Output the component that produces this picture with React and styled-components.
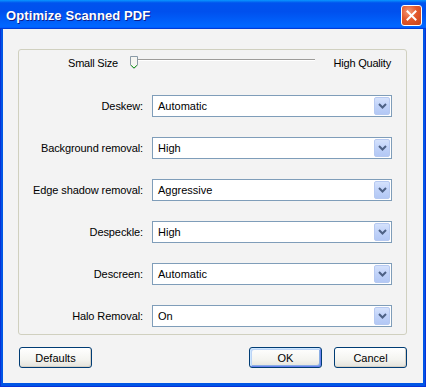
import React from "react";
import styled, { createGlobalStyle } from "styled-components";

const GlobalStyle = createGlobalStyle`
  html, body {
    margin: 0;
    padding: 0;
    background: #ffffff;
  }
  body {
    font-family: "Liberation Sans", Arial, sans-serif;
    font-size: 11px;
  }
`;

const Window = styled.div`
  width: 426px;
  height: 387px;
  box-sizing: border-box;
  display: flex;
  flex-direction: column;
  background: #0055e5;
  border-left: 1px solid #0831d9;
  border-right: 1px solid #0831d9;
  border-bottom: 1px solid #0831d9;
`;

const TitleBar = styled.div`
  height: 29px;
  flex-shrink: 0;
  display: flex;
  align-items: center;
  justify-content: space-between;
  padding: 0 4px 0 6px;
  margin: 0 -1px;
  background: linear-gradient(
    to bottom,
    #0997ff 0%,
    #0053ee 10%,
    #0050ee 40%,
    #0066ff 88%,
    #0066ff 93%,
    #005bff 95%,
    #003dd7 97%,
    #003dd7 100%
  );
`;

const Title = styled.span`
  color: #ffffff;
  font-family: "Liberation Sans", Arial, sans-serif;
  font-weight: bold;
  font-size: 13px;
  letter-spacing: 0.1px;
  text-shadow: 1px 1px 0 #0f1f8c;
  padding-top: 1px;
`;

const CloseButton = styled.div`
  width: 21px;
  height: 21px;
  box-sizing: border-box;
  border: 1px solid #ffffff;
  border-radius: 3px;
  background: radial-gradient(circle at 35% 30%, #f49a78 0%, #e3582c 45%, #c8421a 100%);
  display: flex;
  align-items: center;
  justify-content: center;
  margin-top: 1px;
`;

const Body = styled.div`
  flex: 1;
  margin: 0 2px 3px 2px;
  background: #f3f3f3;
  padding: 20px 16px 0 15px;
  display: flex;
  flex-direction: column;
`;

const GroupBox = styled.div`
  border: 1px solid #d0d0bf;
  border-radius: 3px;
  padding: 6px 15px 7px 0;
  display: flex;
  flex-direction: column;
`;

const SliderRow = styled.div`
  height: 14px;
  margin-bottom: 25px;
  display: flex;
  align-items: flex-start;
  padding-left: 49px;
`;

const SliderLabel = styled.span`
  color: #000000;
  line-height: 14px;
  white-space: nowrap;
  letter-spacing: -0.2px;
`;

const Track = styled.div`
  position: relative;
  width: 184px;
  height: 14px;
  margin: 0 18px 0 14px;
  &::before {
    content: "";
    position: absolute;
    left: 1px;
    right: 0;
    top: 3px;
    height: 1px;
    background: #9d9c99;
    box-shadow: 0 1px 0 #ffffff;
  }
`;

const Thumb = styled.svg`
  position: absolute;
  left: -2px;
  top: 0;
`;

const FieldGrid = styled.div`
  display: grid;
  grid-template-columns: 124px 240px;
  column-gap: 9px;
  row-gap: 20px;
  align-items: center;
`;

const FieldLabel = styled.label`
  text-align: right;
  color: #000000;
  white-space: nowrap;
  letter-spacing: -0.1px;
`;

const Combo = styled.div`
  height: 22px;
  box-sizing: border-box;
  border: 1px solid #7f9db9;
  background: #ffffff;
  display: flex;
  align-items: center;
  justify-content: space-between;
`;

const ComboValue = styled.span`
  padding-left: 5px;
  color: #000000;
`;

const ComboArrow = styled.div`
  width: 16px;
  height: 18px;
  margin-right: 1px;
  box-sizing: border-box;
  border: 1px solid #b6c9f1;
  border-radius: 2px;
  background: linear-gradient(to bottom, #d5e2fc 0%, #c0d2f9 50%, #b3c8f5 100%);
  display: flex;
  align-items: center;
  justify-content: center;
`;

const ButtonBar = styled.div`
  display: flex;
  align-items: center;
  gap: 12px;
  margin-top: 12px;
  padding-left: 1px;
`;

const Spacer = styled.div`
  flex: 1;
`;

const Button = styled.button`
  width: 73px;
  height: 21px;
  box-sizing: border-box;
  border: 1px solid #003c74;
  border-radius: 3px;
  background: linear-gradient(to bottom, #ffffff 0%, #f4f4f0 60%, #e3e2da 100%);
  font-family: "Liberation Sans", Arial, sans-serif;
  font-size: 11px;
  color: #000000;
  padding: 0;
  box-shadow: ${(p) =>
    p.$default
      ? "inset 1px 1px 0 #cee7ff, inset -1px -1px 0 #6982ee, inset 2px 2px 0 #bcd4f6, inset -2px -2px 0 #89ade4"
      : "inset -1px -1px 0 #d6d0c5"};
`;

const fields = [
  ["Deskew:", "Automatic"],
  ["Background removal:", "High"],
  ["Edge shadow removal:", "Aggressive"],
  ["Despeckle:", "High"],
  ["Descreen:", "Automatic"],
  ["Halo Removal:", "On"],
];

const Chevron = () => (
  <svg width="9" height="6" viewBox="0 0 9 6">
    <path d="M1 1 L4.5 4.5 L8 1" stroke="#4d6185" strokeWidth="2" fill="none" />
  </svg>
);

const CloseIcon = () => (
  <svg width="11" height="11" viewBox="0 0 11 11">
    <path d="M1.5 1.5 L9.5 9.5 M9.5 1.5 L1.5 9.5" stroke="#ffffff" strokeWidth="2" strokeLinecap="square" />
  </svg>
);

const App = () => {
  return (
    <>
      <GlobalStyle />
      <Window>
        <TitleBar>
          <Title>Optimize Scanned PDF</Title>
          <CloseButton>
            <CloseIcon />
          </CloseButton>
        </TitleBar>
        <Body>
          <GroupBox>
            <SliderRow>
              <SliderLabel>Small Size</SliderLabel>
              <Track>
                <Thumb width="8" height="13" viewBox="0 0 8 13">
                  <path d="M0.5 0.5 H7.5 V9 L4 12.5 L0.5 9 Z" fill="#f5f5f1" stroke="#8a9aa6" />
                  <path d="M1.2 9.3 L4 12 L6.8 9.3" stroke="#21a121" fill="none" />
                </Thumb>
              </Track>
              <SliderLabel>High Quality</SliderLabel>
            </SliderRow>
            <FieldGrid>
              {fields.map(([label, value]) => (
                <React.Fragment key={label}>
                  <FieldLabel>{label}</FieldLabel>
                  <Combo>
                    <ComboValue>{value}</ComboValue>
                    <ComboArrow>
                      <Chevron />
                    </ComboArrow>
                  </Combo>
                </React.Fragment>
              ))}
            </FieldGrid>
          </GroupBox>
          <ButtonBar>
            <Button>Defaults</Button>
            <Spacer />
            <Button $default>OK</Button>
            <Button>Cancel</Button>
          </ButtonBar>
        </Body>
      </Window>
    </>
  );
};

export default App;
